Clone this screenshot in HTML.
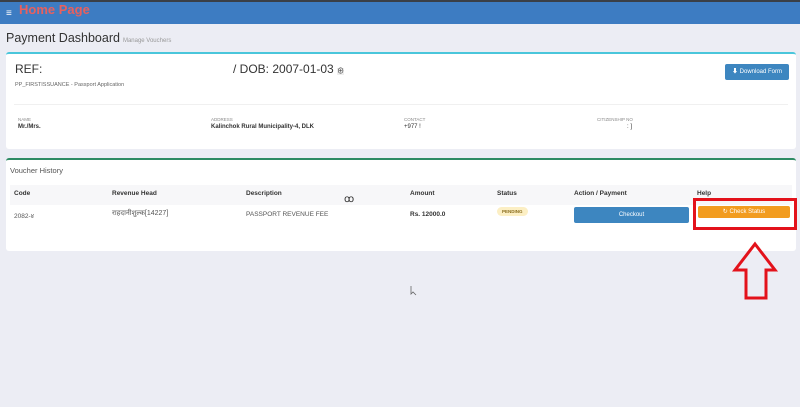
<!DOCTYPE html>
<html><head><meta charset="utf-8"><style>
*{box-sizing:border-box;margin:0;padding:0}
body{width:800px;height:407px;overflow:hidden;background:#ecedf4;font-family:"Liberation Sans","Noto Sans CJK SC",sans-serif;color:#333;position:relative}
.top{position:absolute;left:0;top:0;width:800px;height:2px;background:#3a3f47}
.hdr{position:absolute;left:0;top:2px;width:800px;height:22px;background:#3d7cc2}
.hdr .m{position:absolute;left:6px;top:6px;color:#fff;font-size:10px}
.hdr .t{position:absolute;left:19px;top:0px;color:#e8605e;font-weight:bold;font-size:13px}
.title{position:absolute;left:6px;top:31px;font-size:12.5px;color:#333}
.title small{font-size:6px;color:#999;margin-left:3px}
.card{position:absolute;background:#fff;border-radius:3px}
.c1{left:6px;top:52px;width:790px;height:97px;border-top:2px solid #4ac6db}
.c2{left:6px;top:158px;width:790px;height:93px;border-top:2px solid #2e8b63}
.abs{position:absolute}
.lbl{font-size:4.5px;color:#888}
.val{font-size:6px;font-weight:bold;color:#333;margin-top:2px}
.btn{position:absolute;color:#fff;font-size:6px;text-align:center;border-radius:2px}
</style></head><body>
<div class="top"></div>
<div class="hdr"><span class="m">≡</span><span class="t">Home Page</span></div>
<div class="title">Payment Dashboard<small>Manage Vouchers</small></div>
<div class="card c1">
 <div class="abs" style="left:9px;top:8px;font-size:12px">REF:</div>
 <div class="abs" style="left:227px;top:8px;font-size:12px">/ DOB: 2007-01-03 <span style="font-size:7px;background:#eee">⊕</span></div>
 <div class="abs" style="left:9px;top:28px;font-size:5.5px;color:#666">PP_FIRSTISSUANCE - Passport Application</div>
 <div class="btn" style="left:719px;top:10px;width:64px;height:16px;line-height:16px;background:#3d86c0">⬇ Download Form</div>
 <div class="abs" style="left:8px;top:50px;width:774px;border-top:1px solid #f0f0f0"></div>
 <div class="abs" style="left:12px;top:63px"><div class="lbl">NAME</div><div class="val">Mr./Mrs.</div></div>
 <div class="abs" style="left:205px;top:63px"><div class="lbl">ADDRESS</div><div class="val">Kalinchok Rural Municipality-4, DLK</div></div>
 <div class="abs" style="left:398px;top:63px"><div class="lbl">CONTACT</div><div class="val" style="font-weight:normal">+977 !</div></div>
 <div class="abs" style="left:591px;top:63px"><div class="lbl">CITIZENSHIP NO</div><div class="val" style="font-weight:normal;padding-left:30px">: ]</div></div>
</div>
<div class="card c2">
 <div class="abs" style="left:4px;top:6px;font-size:7.5px;color:#555">Voucher History</div>
 <div class="abs" style="left:4px;top:25px;width:782px;height:20px;background:#f7f7f9"></div>
 <div class="abs" style="left:8px;top:30px;font-size:6.5px;font-weight:bold">Code</div>
 <div class="abs" style="left:106px;top:30px;font-size:6.5px;font-weight:bold">Revenue Head</div>
 <div class="abs" style="left:240px;top:30px;font-size:6.5px;font-weight:bold">Description</div>
 <div class="abs" style="left:338px;top:34px;font-size:10px">ꝏ</div>
 <div class="abs" style="left:404px;top:30px;font-size:6.5px;font-weight:bold">Amount</div>
 <div class="abs" style="left:491px;top:30px;font-size:6.5px;font-weight:bold">Status</div>
 <div class="abs" style="left:568px;top:30px;font-size:6.5px;font-weight:bold">Action / Payment</div>
 <div class="abs" style="left:691px;top:30px;font-size:6.5px;font-weight:bold">Help</div>
 <div class="abs" style="left:8px;top:51px;font-size:6.5px;color:#555">2082-४</div>
 <div class="abs" style="left:106px;top:49px;font-size:7px;color:#555">राहदानीशुल्क[14227]</div>
 <div class="abs" style="left:240px;top:51px;font-size:6.5px;color:#555">PASSPORT REVENUE FEE</div>
 <div class="abs" style="left:404px;top:51px;font-size:6.5px;font-weight:bold">Rs. 12000.0</div>
 <div class="abs" style="left:491px;top:47px;font-size:4.5px;font-weight:bold;background:#fcefc4;color:#8a6d1f;border-radius:5px;padding:2px 5px">PENDING</div>
 <div class="btn" style="left:568px;top:47px;width:115px;height:16px;line-height:16px;background:#3d86c0">Checkout</div>
 <div class="btn" style="left:692px;top:46px;width:92px;height:12px;line-height:12px;background:#f29c1f">↻ Check Status</div>
</div>
<div class="abs" style="left:693px;top:198px;width:104px;height:32px;border:3px solid #e3121b"></div>
<svg class="abs" style="left:0;top:0" width="800" height="407"><polygon points="755,244 775,270 766,270 766,298 746,298 746,270 735,270" fill="none" stroke="#e3121b" stroke-width="3"/>
<path d="M411,286 L411,294 L413,292 L416,295" fill="none" stroke="#666" stroke-width="0.8"/></svg>
</body></html>
